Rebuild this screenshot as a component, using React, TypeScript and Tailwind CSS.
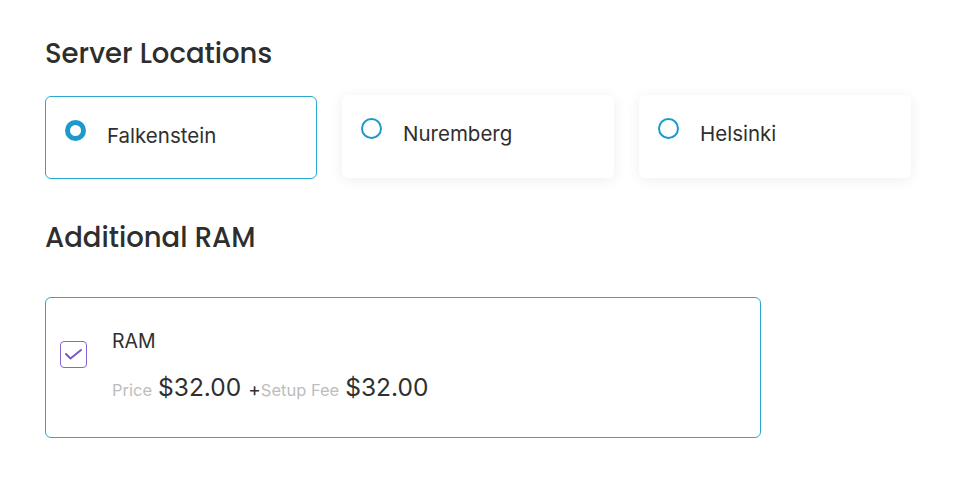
import React from "react";

const heading = { fontFamily: "Poppins, 'Open Sans', 'Noto Sans', sans-serif" };
const body = { fontFamily: "Inter, 'Liberation Sans', sans-serif" };

function Radio({ checked }: { checked: boolean }) {
  return checked ? (
    <span className="block w-[21px] h-[21px] rounded-full border-[5px] border-[#1a9bcb] bg-white shrink-0" />
  ) : (
    <span className="block w-[21px] h-[21px] rounded-full border-2 border-[#1a9bcb] bg-white shrink-0" />
  );
}

function LocationCard({ name, selected }: { name: string; selected?: boolean }) {
  return (
    <div
      className={
        "w-[272px] h-[83px] rounded-[6px] bg-white flex items-start pl-[19px] pt-[23px] " +
        (selected
          ? "border border-[#2aa8d2]"
          : "shadow-[0_2px_14px_rgba(0,0,0,0.07)]")
      }
    >
      <Radio checked={!!selected} />
      <span className="ml-[21px] mt-[3px] text-[20.5px] text-[#2f2f2f] leading-[26px]" style={body}>
        {name}
      </span>
    </div>
  );
}

export default function App() {
  return (
    <div className="bg-white w-[953px] h-[488px] pl-[45px] pt-[35px]">
      <h2 className="text-[27.5px] leading-[38px] text-[#2e2e2e] font-medium" style={heading}>
        Server Locations
      </h2>
      <div className="flex gap-[25px] mt-[23px]">
        <LocationCard name="Falkenstein" selected />
        <div className="-mt-px">
          <LocationCard name="Nuremberg" />
        </div>
        <div className="-mt-px">
          <LocationCard name="Helsinki" />
        </div>
      </div>
      <h2 className="text-[27.5px] leading-[38px] text-[#2e2e2e] font-medium mt-[40px]" style={heading}>
        Additional RAM
      </h2>
      <div className="mt-[40px] w-[716px] h-[141px] border border-[#2aa8d2] rounded-[6px] flex items-start pl-[14px] pt-[30px]">
        <span className="mt-[13px] w-[27px] h-[27px] rounded-[4px] border border-[#8a63d6] flex items-center justify-center shrink-0">
          <svg width="25" height="25" viewBox="0 0 25 25" fill="none" stroke="#7b55cf" strokeWidth="2" strokeLinecap="round" strokeLinejoin="round">
            <path d="M5 12 L9.5 16.5 L20 8" />
          </svg>
        </span>
        <div className="ml-[25px]" style={body}>
          <div className="text-[19.5px] leading-[26px] text-[#2f2f2f]">RAM</div>
          <div className="mt-[15px] flex items-baseline">
            <span className="text-[16.5px] text-[#bdbdbd]">Price</span>
            <span className="ml-[6px] text-[24.5px] text-[#2f2f2f]">$32.00</span>
            <span className="ml-[7px] text-[19px] text-[#2f2f2f]">+</span>
            <span className="text-[16.5px] text-[#bdbdbd]">Setup Fee</span>
            <span className="ml-[6px] text-[24.5px] text-[#2f2f2f]">$32.00</span>
          </div>
        </div>
      </div>
    </div>
  );
}
